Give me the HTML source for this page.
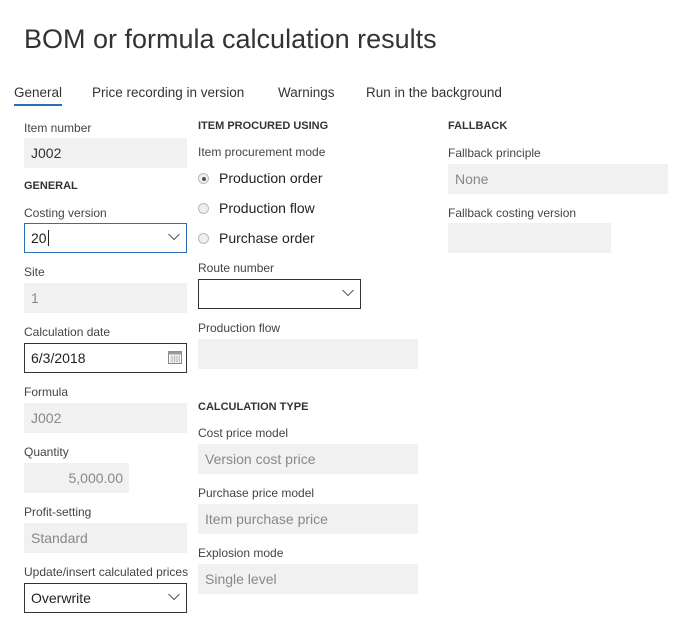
<!DOCTYPE html>
<html><head><style>
body{margin:0;width:680px;height:626px;background:#fff;font-family:"Liberation Sans",sans-serif;position:relative;overflow:hidden;color:#222}
.a{position:absolute;white-space:nowrap}
.t{font-size:27px;font-weight:300;color:#333;left:24px;top:24px;letter-spacing:0px}
.tab{font-size:13.5px;color:#333;top:85px}
.l{font-size:12px;color:#444;line-height:14px}
.h{font-size:11px;font-weight:bold;color:#333;line-height:14px}
.f{position:absolute;height:30px;background:#f1f1f1;box-sizing:border-box;font-size:14px;line-height:30px;padding-left:7px;color:#888}
.b{background:#fff;border:1px solid #333;color:#222;line-height:28px;padding-left:6px}
.chev{position:absolute;right:6px;top:9px;width:12px;height:8px}
.r{font-size:14px;color:#222;left:219px}
.rc{position:absolute;left:198px;width:11px;height:11px;border-radius:50%;border:1px solid #bbb;background:#eee;box-sizing:border-box}
</style></head><body>
<div class="a t">BOM or formula calculation results</div>
<div class="a tab" style="left:14px">General</div>
<div class="a" style="left:14px;top:104px;width:48px;height:2px;background:#2b6fb6"></div>
<div class="a tab" style="left:92px">Price recording in version</div>
<div class="a tab" style="left:278px">Warnings</div>
<div class="a tab" style="left:366px">Run in the background</div>

<div class="a l" style="left:24px;top:121px">Item number</div>
<div class="f" style="left:24px;top:138px;width:163px;color:#333">J002</div>
<div class="a h" style="left:24px;top:179px">GENERAL</div>
<div class="a l" style="left:24px;top:206px">Costing version</div>
<div class="f b" style="left:24px;top:223px;width:163px;border-color:#2b6fb6">20<span style="border-left:1px solid #222;margin-left:1px"></span>
<svg class="chev" viewBox="0 0 12 8"><path d="M0.5 1L6 6.5 11.5 1" fill="none" stroke="#555"/></svg></div>
<div class="a l" style="left:24px;top:265px">Site</div>
<div class="f" style="left:24px;top:283px;width:163px">1</div>
<div class="a l" style="left:24px;top:325px">Calculation date</div>
<div class="f b" style="left:24px;top:343px;width:163px">6/3/2018
<svg style="position:absolute;right:4px;top:7px" width="14" height="13" viewBox="0 0 14 13"><rect x="0.5" y="0.5" width="13" height="12" fill="#fff" stroke="#888"/><rect x="0.5" y="0.5" width="13" height="3" fill="#999"/><path d="M2 6h10M2 8h10M2 10h10M4 4v8M6.5 4v8M9 4v8M11.5 4v8" stroke="#bbb" stroke-width="0.8"/></svg></div>
<div class="a l" style="left:24px;top:385px">Formula</div>
<div class="f" style="left:24px;top:403px;width:163px">J002</div>
<div class="a l" style="left:24px;top:445px">Quantity</div>
<div class="f" style="left:24px;top:463px;width:105px;text-align:right;padding-right:6px">5,000.00</div>
<div class="a l" style="left:24px;top:505px">Profit-setting</div>
<div class="f" style="left:24px;top:523px;width:163px">Standard</div>
<div class="a l" style="left:24px;top:565px">Update/insert calculated prices</div>
<div class="f b" style="left:24px;top:583px;width:163px">Overwrite
<svg class="chev" viewBox="0 0 12 8"><path d="M0.5 1L6 6.5 11.5 1" fill="none" stroke="#555"/></svg></div>

<div class="a h" style="left:198px;top:119px">ITEM PROCURED USING</div>
<div class="a l" style="left:198px;top:145px">Item procurement mode</div>
<div class="rc" style="top:173px"><div style="position:absolute;left:2.5px;top:2.5px;width:4px;height:4px;border-radius:50%;background:#555"></div></div>
<div class="a r" style="top:170px">Production order</div>
<div class="rc" style="top:203px"></div>
<div class="a r" style="top:200px">Production flow</div>
<div class="rc" style="top:233px"></div>
<div class="a r" style="top:230px">Purchase order</div>
<div class="a l" style="left:198px;top:261px">Route number</div>
<div class="f b" style="left:198px;top:279px;width:163px">
<svg class="chev" viewBox="0 0 12 8"><path d="M0.5 1L6 6.5 11.5 1" fill="none" stroke="#555"/></svg></div>
<div class="a l" style="left:198px;top:321px">Production flow</div>
<div class="f" style="left:198px;top:339px;width:220px"></div>
<div class="a h" style="left:198px;top:400px">CALCULATION TYPE</div>
<div class="a l" style="left:198px;top:426px">Cost price model</div>
<div class="f" style="left:198px;top:444px;width:220px">Version cost price</div>
<div class="a l" style="left:198px;top:486px">Purchase price model</div>
<div class="f" style="left:198px;top:504px;width:220px">Item purchase price</div>
<div class="a l" style="left:198px;top:546px">Explosion mode</div>
<div class="f" style="left:198px;top:564px;width:220px">Single level</div>

<div class="a h" style="left:448px;top:119px">FALLBACK</div>
<div class="a l" style="left:448px;top:146px">Fallback principle</div>
<div class="f" style="left:448px;top:164px;width:220px">None</div>
<div class="a l" style="left:448px;top:206px">Fallback costing version</div>
<div class="f" style="left:448px;top:223px;width:163px"></div>
</body></html>
